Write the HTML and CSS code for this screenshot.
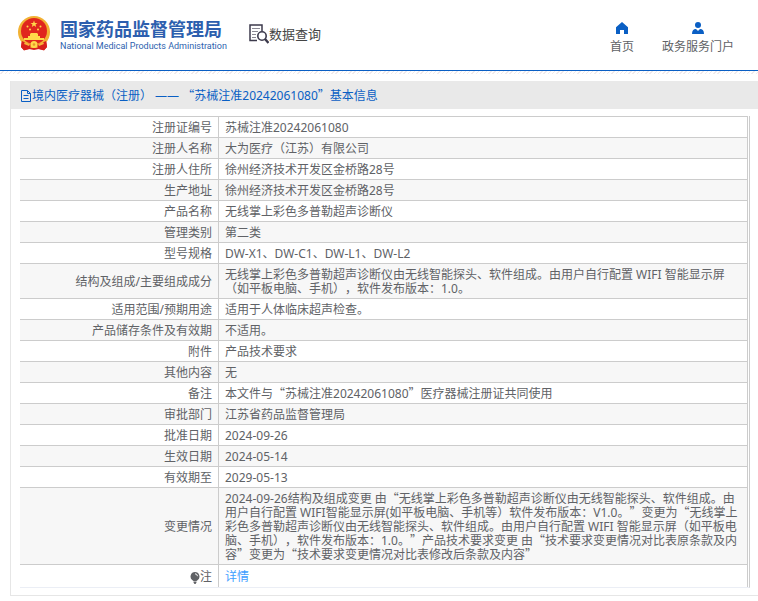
FILE: index.html
```html
<!DOCTYPE html>
<html lang="zh-CN">

<head>
    <meta charset="UTF-8">
    <meta name="viewport" content="width=device-width, initial-scale=1.0">
    <title>国家药品监督管理局 数据查询</title>
    <link rel="stylesheet" href="styles.css">
</head>

<body>
    <header class="header">
        <div class="logo">
            <svg class="emblem" viewBox="0 0 32 35" width="32" height="35" aria-hidden="true">
                <path d="M4 23h24l1 8-3 3.500-5-1.500-5 1-5-1-5 1.500-3-3.500z" fill="#d8201c" />
                <circle cx="16" cy="16" r="16" fill="#f2b234" />
                <circle cx="16" cy="15" r="13" fill="#e0261e" />
                <path d="M16 4.500l.9 2.400h2.600l-2 1.600.7 2.500-2.200-1.500-2.200 1.500.7-2.500-2-1.600h2.600z" fill="#ffd84a" />
                <circle cx="9.500" cy="10.500" r="1" fill="#ffd84a" />
                <circle cx="12" cy="13.500" r="1" fill="#ffd84a" />
                <circle cx="20" cy="13.500" r="1" fill="#ffd84a" />
                <circle cx="22.500" cy="10.500" r="1" fill="#ffd84a" />
                <path d="M12 18l1-1h6l1 1v2h2v2h4v2H6v-2h4v-2h2z" fill="#ffd84a" />
                <path d="M4 25q5 3 9 3l-1 5-6 1-3-3zM28 25q-5 3-9 3l1 5 6 1 3-3z" fill="#d8201c" />
                <path d="M7 26l5 2-1 2-5-2zM25 26l-5 2 1 2 5-2z" fill="#f5b53a" />
                <circle cx="16" cy="28.500" r="3.500" fill="#ffd84a" />
                <circle cx="16" cy="28.500" r="1.300" fill="#e8952a" />
            </svg>
            <div class="logo-text">
                <div class="logo-cn">国家药品监督管理局</div>
                <div class="logo-en">National Medical Products Administration</div>
            </div>
        </div>
        <div class="query">
            <svg viewBox="0 0 20 20" width="20" height="20" fill="none" stroke="#3c3a4c" aria-hidden="true">
                <path d="M8 16.500H1V1h12v6" stroke-width="1.500" />
                <path d="M3 4.500h8M3 7.500h6M3 10.500h4M3 13.500h4" stroke="#8a8994" />
                <circle cx="13" cy="12" r="4.200" stroke-width="1.600" />
                <path d="M16 15l3.500 4" stroke-width="2.400" />
            </svg>
            <span>数据查询</span>
        </div>
        <nav class="nav">
            <a href="#">
                <svg viewBox="0 0 12 12" width="12" height="12" aria-hidden="true">
                    <path d="M6 0l6 5.200V12H8V8H4v4H0V5.200z" fill="#0a5fc4" />
                </svg>
                <span>首页</span>
            </a>
            <a href="#">
                <svg viewBox="0 0 12 12" width="12" height="12" aria-hidden="true">
                    <circle cx="6" cy="3" r="3" fill="#0a5fc4" />
                    <path d="M0 12q0-5 4-5l2 2 2-2q4 0 4 5z" fill="#0a5fc4" />
                </svg>
                <span>政务服务门户</span>
            </a>
        </nav>
    </header>
    <div class="header-shade"></div>

    <main class="panel">
        <h1 class="panel-title">
            <svg viewBox="0 0 10 12" width="10" height="12" fill="none" stroke="#0a5fc4" aria-hidden="true">
                <path d="M.5.500h6l3 3v8h-9zM6.500.500v3h3M2.500 5.500h5M2.500 8.500h5" />
            </svg>
            <span>境内医疗器械（注册） —— <span class="q">“</span>苏械注准20242061080<span class="q">”</span>基本信息</span>
        </h1>
        <div class="panel-body">
            <table class="info">
                <tbody>
                    <tr><th scope="row">注册证编号</th><td>苏械注准20242061080</td></tr>
                    <tr><th scope="row">注册人名称</th><td>大为医疗（江苏）有限公司</td></tr>
                    <tr><th scope="row">注册人住所</th><td>徐州经济技术开发区金桥路28号</td></tr>
                    <tr><th scope="row">生产地址</th><td>徐州经济技术开发区金桥路28号</td></tr>
                    <tr><th scope="row">产品名称</th><td>无线掌上彩色多普勒超声诊断仪</td></tr>
                    <tr><th scope="row">管理类别</th><td>第二类</td></tr>
                    <tr><th scope="row">型号规格</th><td>DW-X1、DW-C1、DW-L1、DW-L2</td></tr>
                    <tr><th scope="row">结构及组成/主要组成成分</th><td>无线掌上彩色多普勒超声诊断仪由无线智能探头、软件组成。由用户自行配置 WIFI 智能显示屏（如平板电脑、手机），软件发布版本：1.0。</td></tr>
                    <tr><th scope="row">适用范围/预期用途</th><td>适用于人体临床超声检查。</td></tr>
                    <tr><th scope="row">产品储存条件及有效期</th><td>不适用。</td></tr>
                    <tr><th scope="row">附件</th><td>产品技术要求</td></tr>
                    <tr><th scope="row">其他内容</th><td>无</td></tr>
                    <tr><th scope="row">备注</th><td>本文件与<span class="q">“</span>苏械注准20242061080<span class="q">”</span>医疗器械注册证共同使用</td></tr>
                    <tr><th scope="row">审批部门</th><td>江苏省药品监督管理局</td></tr>
                    <tr><th scope="row">批准日期</th><td>2024-09-26</td></tr>
                    <tr><th scope="row">生效日期</th><td>2024-05-14</td></tr>
                    <tr><th scope="row">有效期至</th><td>2029-05-13</td></tr>
                    <tr><th scope="row">变更情况</th><td>2024-09-26结构及组成变更 由<span class="q">“</span>无线掌上彩色多普勒超声诊断仪由无线智能探头、软件组成。由用户自行配置 WIFI智能显示屏(如平板电脑、手机等）软件发布版本：V1.0。<span class="q">”</span>变更为<span class="q">“</span>无线掌上彩色多普勒超声诊断仪由无线智能探头、软件组成。由用户自行配置 WIFI 智能显示屏（如平板电脑、手机），软件发布版本：1.0。<span class="q">”</span>产品技术要求变更 由<span class="q">“</span>技术要求变更情况对比表原条款及内容<span class="q">”</span>变更为<span class="q">“</span>技术要求变更情况对比表修改后条款及内容<span class="q">”</span></td></tr>
                    <tr class="note">
                        <th scope="row">
                            <svg viewBox="0 0 10 12" width="10" height="12" aria-hidden="true">
                                <path d="M5 0a4.500 4.500 0 0 1 2.500 8.200L6.500 9h-3l-1-.8A4.500 4.500 0 0 1 5 0zM3.500 9.500h3v1L5.500 12h-1l-1-1.500z" fill="#606266" />
                                <path d="M5 1.800q2.200 0 2.500 2.400" fill="none" stroke="#fff" />
                            </svg>注
                        </th>
                        <td><a href="#">详情</a></td>
                    </tr>
                </tbody>
            </table>
        </div>
    </main>
</body>

</html>
```
FILE: styles.css
```css
* {
    box-sizing: border-box;
}

body {
    margin: 0;
    background: #fff;
    color: #606266;
    font-family: "Noto Sans", "Noto Sans CJK SC", sans-serif;
    font-size: 12px;
    line-height: 14px;
    text-spacing-trim: space-all;
}

a {
    color: #409eff;
    text-decoration: none;
}

svg {
    flex: none;
}

/* full-width quotation marks */
.q {
    font-family: "Noto Sans CJK SC", sans-serif;
    line-height: 10px;
}

.header {
    display: flex;
    align-items: center;
    height: 71px;
    padding: 0 24px 4px 18px;
    border-bottom: 1px solid #0a5fc4;
}

.header-shade {
    height: 3px;
    background: repeating-linear-gradient(135deg, #fff 0 2px, #f0eaec 2px 3px);
}

.logo {
    display: flex;
    align-items: center;
    gap: 10px;
    color: #2d5fae;
}

.logo-text {
    padding-top: 4px;
}

.logo-cn {
    font-size: 18px;
    line-height: 22px;
    font-weight: 700;
}

.logo-en {
    font-family: Roboto, sans-serif;
    font-size: 9px;
    line-height: 12px;
    font-weight: 400;
}

.query {
    display: flex;
    align-items: center;
    margin-left: 22px;
    padding-top: 2px;
    color: #444;
    font-size: 13px;
    line-height: 20px;
}

.nav {
    display: flex;
    gap: 28px;
    margin-left: auto;
}

.nav a {
    display: flex;
    flex-direction: column;
    align-items: center;
    gap: 6px;
    padding-top: 10px;
    color: #606266;
}

.panel {
    margin: 7px 0 5px 10px;
    border-left: 1px solid #e6e6e6;
    border-bottom: 1px solid #e6e6e6;
}

.panel-title {
    display: flex;
    align-items: center;
    gap: 1px;
    margin: 0;
    padding: 8px 10px 6px;
    background: #e9e9e9;
    color: #0a5fc4;
    font-size: 12px;
    line-height: 14px;
    font-weight: 400;
}

.panel-body {
    padding: 7px 8px 7px 9px;
}

.info {
    width: 100%;
    border-collapse: separate;
    border-spacing: 0;
    border-right: 1px solid #ccc;
    border-bottom: 1px solid #ebeef5;
    padding-right: 1px;
}

.info th,
.info td {
    padding: 4px 6px 2px;
    border-top: 1px solid #ccc;
    border-right: 1px solid #ccc;
    font-weight: 400;
    vertical-align: middle;
}

.info th {
    width: 199px;
    text-align: right;
}

.info td {
    text-align: left;
}

.info tr:nth-child(even) {
    background: #f7f7f7;
}

.info .note th,
.info .note td {
    padding: 5px 6px 3px;
}

.note svg {
    vertical-align: middle;
}
```
